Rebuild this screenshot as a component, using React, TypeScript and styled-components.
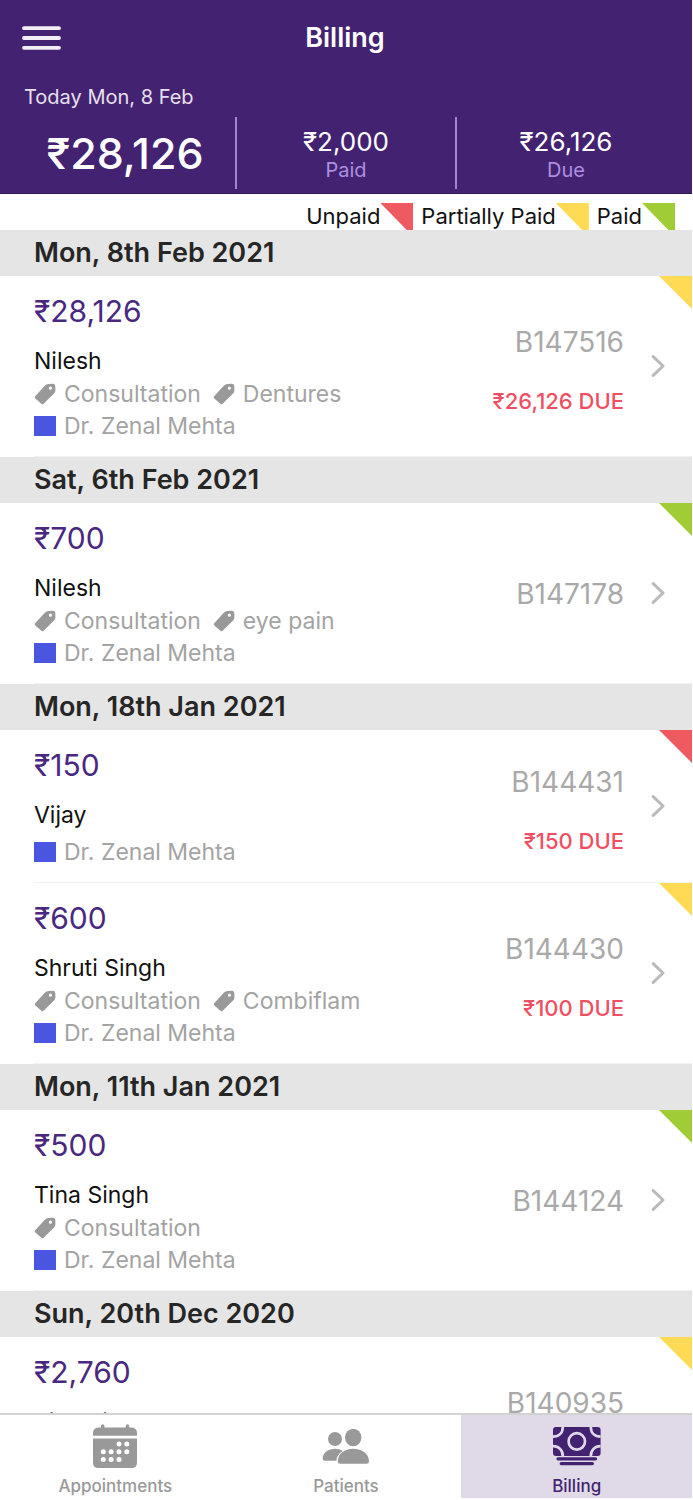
import React from "react";
import styled, { createGlobalStyle } from "styled-components";

type Status = "unpaid" | "partial" | "paid";

interface Bill {
  id: string;
  amount: string;
  patient: string;
  tags: string[];
  due?: string;
  status: Status;
}

interface Day {
  date: string;
  bills: Bill[];
}

const statusColor: Record<Status, string> = {
  unpaid: "#ee5a60",
  partial: "#ffdb55",
  paid: "#a0cd36",
};

const legend: { label: string; status: Status }[] = [
  { label: "Unpaid", status: "unpaid" },
  { label: "Partially Paid", status: "partial" },
  { label: "Paid", status: "paid" },
];

const days: Day[] = [
  {
    date: "Mon, 8th Feb 2021",
    bills: [
      { id: "B147516", amount: "₹28,126", patient: "Nilesh", tags: ["Consultation", "Dentures"], due: "₹26,126 DUE", status: "partial" },
    ],
  },
  {
    date: "Sat, 6th Feb 2021",
    bills: [
      { id: "B147178", amount: "₹700", patient: "Nilesh", tags: ["Consultation", "eye pain"], status: "paid" },
    ],
  },
  {
    date: "Mon, 18th Jan 2021",
    bills: [
      { id: "B144431", amount: "₹150", patient: "Vijay", tags: [], due: "₹150 DUE", status: "unpaid" },
      { id: "B144430", amount: "₹600", patient: "Shruti Singh", tags: ["Consultation", "Combiflam"], due: "₹100 DUE", status: "partial" },
    ],
  },
  {
    date: "Mon, 11th Jan 2021",
    bills: [
      { id: "B144124", amount: "₹500", patient: "Tina Singh", tags: ["Consultation"], status: "paid" },
    ],
  },
  {
    date: "Sun, 20th Dec 2020",
    bills: [
      { id: "B140935", amount: "₹2,760", patient: "Tina Singh", tags: ["Consultation"], due: "₹760 DUE", status: "partial" },
    ],
  },
];

const GlobalStyle = createGlobalStyle`
  *, *::before, *::after { box-sizing: border-box; }
  body {
    margin: 0;
    background: #fff;
    color: #111;
    font-family: Inter, "Liberation Sans", sans-serif;
  }
  h1, h2, p, ul { margin: 0; padding: 0; }
  ul { list-style: none; }
  a { color: inherit; text-decoration: none; }
`;

const Screen = styled.div`
  display: flex;
  flex-direction: column;
  height: 100vh;
  padding: 0 1px 2px 0;
`;

const Header = styled.header`
  flex: none;
  padding: 0 17px 4px 15px;
  background: #432371;
  border-bottom: 1px solid #33195c;
  color: #fff;
`;

const TitleBar = styled.div`
  display: grid;
  grid-template-columns: 1fr auto 1fr;
  align-items: center;
  height: 76px;
`;

const MenuButton = styled.button`
  justify-self: start;
  display: flex;
  padding: 8px 7px;
  border: 0;
  background: none;
  color: #f1eef5;
`;

const Title = styled.h1`
  font-size: 27px;
  line-height: 32px;
  font-weight: 600;
`;

const Today = styled.p`
  padding: 6px 9px 5px;
  font-size: 20px;
  line-height: 30px;
  color: #e6e0ef;
`;

const Stats = styled.div`
  display: grid;
  grid-template-columns: repeat(3, 1fr);
  height: 72px;
`;

const Stat = styled.div`
  display: flex;
  flex-direction: column;
  align-items: center;
  justify-content: center;

  & + & {
    border-left: 2px solid #a385d6;
  }
`;

const Total = styled.strong`
  font-size: 43px;
  line-height: 48px;
  font-weight: 500;
`;

const StatValue = styled.span`
  padding-top: 4px;
  font-size: 26px;
  line-height: 30px;
`;

const StatLabel = styled.span`
  font-size: 20px;
  line-height: 27px;
  color: #ac8fe0;
`;

const Legend = styled.ul`
  flex: none;
  display: flex;
  justify-content: flex-end;
  gap: 8px;
  padding: 9px 17px 0 0;
`;

const LegendItem = styled.li`
  display: flex;
  font-size: 22px;
  line-height: 27px;
`;

const LegendMark = styled.span<{ $status: Status }>`
  width: 33px;
  background: ${(p) => statusColor[p.$status]};
  clip-path: polygon(0 0, 100% 0, 100% 100%, 80% 100%);
`;

const List = styled.main`
  flex: 1;
  min-height: 0;
  overflow-y: auto;
  scrollbar-width: none;
`;

const DayHeading = styled.h2`
  padding: 0 34px;
  background: #e5e5e5;
  color: #262626;
  font-size: 27px;
  line-height: 46px;
  font-weight: 600;
`;

const BillLink = styled.a`
  position: relative;
  display: flex;
  align-items: center;
  margin-left: 34px;
  padding-right: 27px;
  border-bottom: 1px solid #f2f2f2;
`;

const Corner = styled.span<{ $status: Status }>`
  position: absolute;
  top: 0;
  right: 0;
  width: 33px;
  height: 33px;
  background: ${(p) => statusColor[p.$status]};
  clip-path: polygon(0 0, 100% 0, 100% 100%);
`;

const Details = styled.div`
  flex: 1;
  min-width: 0;
  padding: 15px 0 14px;
`;

const Amount = styled.p`
  font-size: 30px;
  line-height: 40px;
  color: #4a2880;
`;

const Patient = styled.p`
  padding-top: 14px;
  font-size: 23px;
  line-height: 32px;
`;

const Meta = styled.div`
  display: flex;
  flex-direction: column;
  justify-content: flex-end;
  min-height: 37px;
  font-size: 23px;
  line-height: 32px;
  color: #a3a3a3;
`;

const Tags = styled.ul`
  display: flex;
  gap: 12px;
  padding-top: 1px;
`;

const Tagged = styled.li`
  display: flex;
  align-items: center;
  gap: 8px;
`;

const Doctor = styled.p`
  display: flex;
  align-items: center;
  gap: 8px;
`;

const DoctorColor = styled.span`
  width: 22px;
  height: 20px;
  background: #4a55e0;
`;

const Reference = styled.div`
  display: flex;
  flex-direction: column;
  align-items: flex-end;
  gap: 28px;
  padding-top: 2px;
  margin-right: 27px;
`;

const BillId = styled.span`
  font-size: 28px;
  line-height: 40px;
  color: #a9a9a9;
`;

const Due = styled.span`
  font-size: 22px;
  line-height: 22px;
  font-weight: 500;
  color: #f04f63;
`;

const Tabs = styled.nav`
  flex: none;
  display: grid;
  grid-template-columns: repeat(3, 1fr);
  border-top: 2px solid #d2d2d2;
`;

const Tab = styled.a<{ $active?: boolean }>`
  display: flex;
  flex-direction: column;
  align-items: center;
  gap: 6px;
  padding: 7px 0 2px;
  font-size: 17px;
  line-height: 20px;
  font-weight: 500;
  color: ${(p) => (p.$active ? "#432371" : "#999")};
  background: ${(p) => (p.$active ? "#e0dae8" : "#fff")};
`;

const MenuIcon = () => (
  <svg width="39" height="26" viewBox="0 0 39 26" stroke="currentColor" strokeWidth="3.8" strokeLinecap="round" aria-hidden="true">
    <path d="M2 3.2H37M2 13H37M2 22.8H37" />
  </svg>
);

const TagIcon = () => (
  <svg width="22" height="22" viewBox="0 0 22 22" fill="#999" aria-hidden="true">
    <path
      fillRule="evenodd"
      d="M1.2 13.2 10.8 2.8Q12.4 1.1 14.6 1L18.8.8Q21.2.8 21.3 3.2L21.4 7.4Q21.4 9.4 19.8 10.8L9.6 20.8Q8.5 21.8 7.4 20.8L1.3 15.4Q.2 14.3 1.2 13.2ZM16.4 3.6A1.6 1.6 0 1 0 16.4 6.8 1.6 1.6 0 1 0 16.4 3.6Z"
    />
  </svg>
);

const ChevronIcon = () => (
  <svg width="14" height="24" viewBox="0 0 14 24" fill="none" stroke="#bababa" strokeWidth="3" strokeLinecap="round" strokeLinejoin="round" aria-hidden="true">
    <path d="M2.2 2.6 12 12 2.2 21.4" />
  </svg>
);

const CalendarIcon = () => (
  <svg width="48" height="48" viewBox="0 0 48 48" fill="currentColor" aria-hidden="true">
    <path d="M2 13.8V11Q2 5.4 8 5.4H10V4Q10 2.2 11.7 2.2T13.4 4V5.4H34.8V4Q34.8 2.2 36.5 2.2T38.2 4V5.4H40Q46 5.4 46 11V13.8Z" />
    <path d="M2 16.4H46V40.4Q46 46 40.4 46H7.6Q2 46 2 40.4Z" />
    <g fill="#fff">
      <circle cx="28" cy="22" r="2.5" />
      <circle cx="35.8" cy="22" r="2.5" />
      <circle cx="12.3" cy="29.7" r="2.5" />
      <circle cx="20.1" cy="29.7" r="2.5" />
      <circle cx="28" cy="29.7" r="2.5" />
      <circle cx="35.8" cy="29.7" r="2.5" />
      <circle cx="12.3" cy="37.4" r="2.5" />
      <circle cx="20.1" cy="37.4" r="2.5" />
      <circle cx="28" cy="37.4" r="2.5" />
    </g>
  </svg>
);

const PeopleIcon = () => (
  <svg width="48" height="48" viewBox="0 0 48 48" fill="currentColor" aria-hidden="true">
    <circle cx="13" cy="17" r="7" />
    <path d="M.6 36.4C1 30.6 6.4 26.8 13 26.8C16 26.8 18.8 27.6 20.8 29C17 31 14.6 34.4 14.4 38.7H3Q.6 38.7.6 36.4Z" />
    <ellipse cx="31.2" cy="15.5" rx="8.2" ry="8.8" />
    <path d="M15.8 39.4C15.8 32 22.4 26.8 31.2 26.8S47 32 47 39.4Q47 41.7 44.6 41.7H18.2Q15.8 41.7 15.8 39.4Z" />
  </svg>
);

const MoneyIcon = () => (
  <svg width="48" height="48" viewBox="0 0 48 48" aria-hidden="true">
    <rect x="0" y="5" width="47.6" height="29" rx="3" fill="currentColor" />
    <g fill="none" stroke="#e0dae8" strokeWidth="2.7">
      <path d="M0 14.6C5.8 14.6 9.8 11 9.8 5M37.8 5C37.8 11 41.8 14.6 47.6 14.6M0 24.2C5.8 24.2 9.8 28 9.8 34M37.8 34C37.8 28 41.8 24.2 47.6 24.2" />
      <circle cx="23.8" cy="19.4" r="8.2" />
    </g>
    <path d="M5 36.8H42.6M8.2 41.6H39.4" stroke="currentColor" strokeWidth="3.2" strokeLinecap="round" />
  </svg>
);

const BillRow = ({ bill }: { bill: Bill }) => (
  <BillLink href={`#${bill.id}`}>
    <Corner $status={bill.status} />
    <Details>
      <Amount>{bill.amount}</Amount>
      <Patient>{bill.patient}</Patient>
      <Meta>
        {bill.tags.length > 0 && (
          <Tags>
            {bill.tags.map((tag) => (
              <Tagged key={tag}>
                <TagIcon />
                {tag}
              </Tagged>
            ))}
          </Tags>
        )}
        <Doctor>
          <DoctorColor />
          Dr. Zenal Mehta
        </Doctor>
      </Meta>
    </Details>
    <Reference>
      <BillId>{bill.id}</BillId>
      {bill.due && <Due>{bill.due}</Due>}
    </Reference>
    <ChevronIcon />
  </BillLink>
);

export default function App() {
  return (
    <Screen>
      <GlobalStyle />
      <Header>
        <TitleBar>
          <MenuButton type="button" aria-label="Menu">
            <MenuIcon />
          </MenuButton>
          <Title>Billing</Title>
        </TitleBar>
        <Today>Today Mon, 8 Feb</Today>
        <Stats>
          <Stat>
            <Total>₹28,126</Total>
          </Stat>
          <Stat>
            <StatValue>₹2,000</StatValue>
            <StatLabel>Paid</StatLabel>
          </Stat>
          <Stat>
            <StatValue>₹26,126</StatValue>
            <StatLabel>Due</StatLabel>
          </Stat>
        </Stats>
      </Header>
      <Legend>
        {legend.map((item) => (
          <LegendItem key={item.status}>
            {item.label}
            <LegendMark $status={item.status} />
          </LegendItem>
        ))}
      </Legend>
      <List>
        {days.map((day) => (
          <section key={day.date}>
            <DayHeading>{day.date}</DayHeading>
            <ul>
              {day.bills.map((bill) => (
                <li key={bill.id}>
                  <BillRow bill={bill} />
                </li>
              ))}
            </ul>
          </section>
        ))}
      </List>
      <Tabs>
        <Tab href="#appointments">
          <CalendarIcon />
          Appointments
        </Tab>
        <Tab href="#patients">
          <PeopleIcon />
          Patients
        </Tab>
        <Tab href="#billing" $active aria-current="page">
          <MoneyIcon />
          Billing
        </Tab>
      </Tabs>
    </Screen>
  );
}
